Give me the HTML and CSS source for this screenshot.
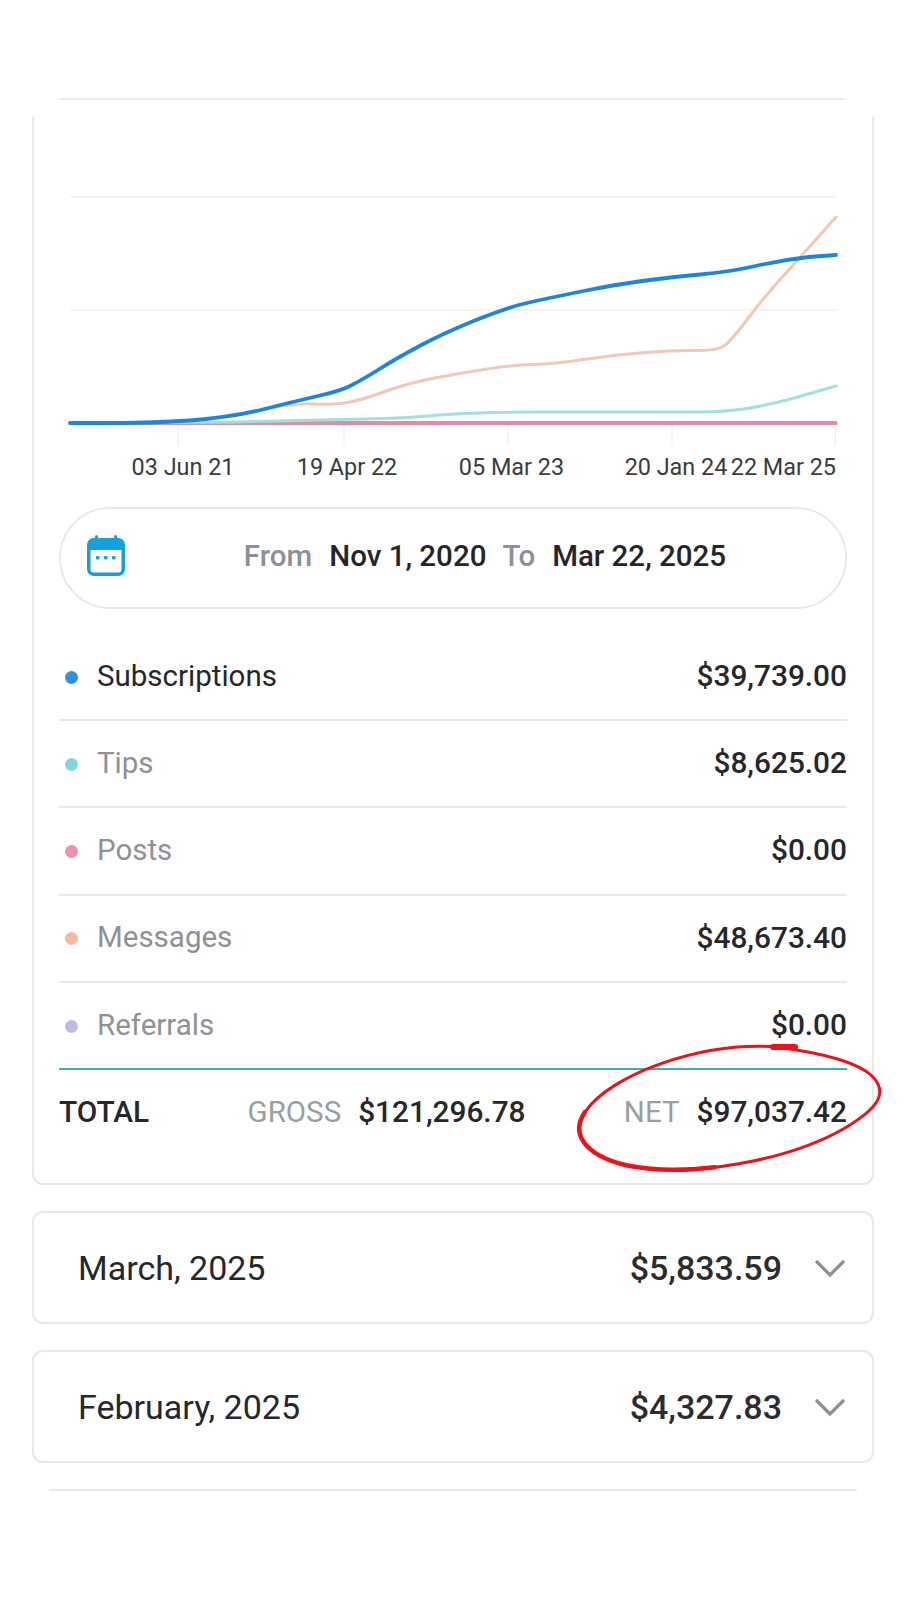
FILE: index.html
```html
<!DOCTYPE html>
<html lang="en">
<head>
<meta charset="utf-8">
<title>Earnings statistics</title>
<link rel="stylesheet" href="styles.css">
</head>
<body>
<main class="page">
  <div class="rule rule-top"></div>
  <section class="card">
    <svg class="chart" viewBox="34 117 838 390" width="838" height="390">
      <g class="grid">
        <path d="M70 197H836M70 310H836"/>
        <path class="ticks" d="M178 423V445M344 423V445M508 423V445M672 423V445M835.500 423V445"/>
      </g>
      <path class="line purple" d="M70 422H836"/>
      <path class="line pink" d="M70 423.500H836"/>
      <path class="line teal" d="M70 423L233 422L385 418.500Q408 418 428.500 416Q449 414 478.500 413Q508 412 540 412L700 412Q724 412 747 408.500Q770 405 803 395.500L836 386"/>
      <path class="line peach" d="M233 416L262.500 410Q292 403 312.500 404Q333 405 347.500 402.500Q362 400 385 391.500Q408 383 437.500 377.500Q467 372 490.500 368.500Q514 365 534 364.500Q554 364 583.500 359.500Q613 355 645 352.500Q677 350 697.500 350.500Q719 351 726.500 344Q734 337 749.500 316.500Q765 296 785 274L836 217"/>
      <path class="line blue" d="M70 423L120 423Q150 423 190 420.500Q233 417 262.500 409.500Q292 402 318 396Q340 391 350 386Q362 380 379.500 369Q397 358 420.500 345.500Q444 333 476 320Q508 307 531 302Q554 297 583.500 291Q613 285 642 281Q671 277 700 274.500Q729 272 755.500 266Q782 260 809 257L836 255"/>
      <g class="axis">
        <text x="183" y="474.500" text-anchor="middle">03 Jun 21</text>
        <text x="347" y="474.500" text-anchor="middle">19 Apr 22</text>
        <text x="511.500" y="474.500" text-anchor="middle">05 Mar 23</text>
        <text x="676" y="474.500" text-anchor="middle">20 Jan 24</text>
        <text x="836" y="474.500" text-anchor="end">22 Mar 25</text>
      </g>
    </svg>

    <div class="range">
      <svg class="cal" viewBox="0 0 38 41" width="38" height="41">
        <rect class="cal-body" x="1.750" y="4.750" width="34.500" height="34.500" rx="5"/>
        <path class="cal-band" d="M3 9a3 3 0 0 1 3-3h26a3 3 0 0 1 3 3v6H3z"/>
        <rect class="cal-fill" x="8" y="0" width="3" height="6" rx="1.500"/>
        <rect class="cal-fill" x="27" y="0" width="3" height="6" rx="1.500"/>
        <rect class="cal-fill" x="9" y="21" width="3.500" height="3.500" rx="1"/>
        <rect class="cal-fill" x="17" y="21" width="3.500" height="3.500" rx="1"/>
        <rect class="cal-fill" x="25" y="21" width="3.500" height="3.500" rx="1"/>
      </svg>
      <div class="range-text">
        <span class="muted">From</span><strong>Nov 1, 2020</strong><span class="muted">To</span><strong>Mar 22, 2025</strong>
      </div>
    </div>

    <ul class="rows">
      <li class="row"><span class="dot d-blue"></span><span class="name first">Subscriptions</span><span class="val">$39,739.00</span></li>
      <li class="row"><span class="dot d-teal"></span><span class="name">Tips</span><span class="val">$8,625.02</span></li>
      <li class="row"><span class="dot d-pink"></span><span class="name">Posts</span><span class="val">$0.00</span></li>
      <li class="row"><span class="dot d-peach"></span><span class="name">Messages</span><span class="val">$48,673.40</span></li>
      <li class="row"><span class="dot d-purple"></span><span class="name">Referrals</span><span class="val">$0.00</span></li>
    </ul>

    <div class="total">
      <span class="val">TOTAL</span>
      <span class="pair"><span class="soft">GROSS</span><span class="val">$121,296.78</span></span>
      <span class="pair"><span class="soft">NET</span><span class="val">$97,037.42</span></span>
    </div>
  </section>

  <section class="month">
    <span class="m-name">March, 2025</span>
    <span class="m-val">$5,833.59</span>
    <svg class="chev" viewBox="0 0 32 20" width="32" height="20"><path d="M2 3L16 17L30 3"/></svg>
  </section>
  <section class="month">
    <span class="m-name">February, 2025</span>
    <span class="m-val">$4,327.83</span>
    <svg class="chev" viewBox="0 0 32 20" width="32" height="20"><path d="M2 3L16 17L30 3"/></svg>
  </section>
  <div class="rule rule-bottom"></div>

  <svg class="scribble" viewBox="0 0 915 1600" width="915" height="1600">
    <path d="M778 1047C700 1041 610 1075 585 1112C570 1134 585 1155 625 1165C690 1179 790 1160 845 1128C880 1107 888 1092 872 1076C855 1060 815 1052 776 1047"/>
    <path class="heavy" d="M585 1112C570 1134 585 1155 625 1165C651 1170.600 682.600 1170.900 714.700 1167.200"/>
    <path class="thick" d="M773 1047H795"/>
  </svg>
</main>
</body>
</html>
```
FILE: styles.css
```css
* { box-sizing: border-box; }
html, body { margin: 0; background: #fff; }
body { font-family: Roboto, "Liberation Sans", sans-serif; color: #242529; }

.page { position: relative; width: 915px; height: 1600px; padding-top: 98px; overflow: hidden; }

.rule { height: 2px; background: #e9e9ea; }
.rule-top { width: 786px; margin-left: 59px; margin-bottom: 17px; }
.rule-bottom { width: 808px; margin-left: 49px; }

.card { width: 842px; height: 1068px; margin: 0 0 26px 32px;
  border: 2px solid #e8e8ea; border-top: 0; border-radius: 0 0 11px 11px; }

.chart { display: block; }
.grid path { fill: none; stroke: #f1f1f2; stroke-width: 1.500; }
.grid .ticks { stroke: #ececee; stroke-width: 1; }
.line { fill: none; stroke-linecap: round; stroke-linejoin: round; }
.blue { stroke: #1b86dd; stroke-width: 3.800; }
.peach { stroke: #f3c6b6; stroke-width: 3; }
.teal { stroke: #a0e1de; stroke-width: 3; }
.pink { stroke: #e58aa3; stroke-width: 3; }
.purple { stroke: #a9a5bd; stroke-width: 2; }
.axis text { font-size: 23.400px; fill: #3a3b40; }

.range { display: flex; align-items: center; width: 788px; height: 102px; margin-left: 25px;
  padding: 0 0 5px 26px; border: 2px solid #e8e8ea; border-radius: 51px; }
.cal { flex: none; }
.cal-body { fill: #fff; stroke: #14a0dc; stroke-width: 3.500; }
.cal-band, .cal-fill { fill: #14a0dc; }
.range-text { flex: 1; display: flex; justify-content: center; align-items: baseline;
  font-size: 29.500px; }
.range-text strong { font-weight: 500; margin: 0 16px 0 17px; }
.range-text strong:last-child { margin-right: 0; }
.muted { color: #8d9098; font-weight: 500; }

.rows { list-style: none; margin: 22px 0 0 25px; padding: 0; width: 788px; }
.row { display: flex; align-items: center; height: 87.300px; padding-bottom: 2px;
  border-bottom: 2px solid #e9e9eb; font-size: 29.500px; }
.rows .row:first-child { height: 90px; padding: 1px 0 0; }
.rows .row:last-child { border-bottom-color: #45a9bb; }
.dot { flex: none; width: 13px; height: 13px; margin: 3px 0 0 6px; border-radius: 50%; }
.d-blue { background: #2f8fe2; }
.d-teal { background: #7fd9d8; }
.d-pink { background: #ef90b0; }
.d-peach { background: #f8b9a1; }
.d-purple { background: #c2bae2; }
.name { flex: 1; margin-left: 19px; color: #8f9196; }
.name.first { color: #26272b; }
.val { font-weight: 500; color: #26272b; font-size: 29.800px; }

.total { display: flex; justify-content: space-between; align-items: center; width: 788px; height: 82px; margin-left: 25px; }
.pair { display: flex; align-items: baseline; gap: 17px; }
.soft { font-size: 29.500px; color: #9a9da2; }

.month { display: flex; align-items: center; width: 842px; height: 113px; margin: 0 0 26px 32px;
  padding: 0 26px 0 44px; border: 2px solid #e8e8ea; border-radius: 11px; }
.m-name { flex: 1; font-size: 34px; color: #26272b; }
.m-val { font-size: 34px; font-weight: 500; color: #2b2c30; margin-right: 32px; }
.chev { flex: none; }
.chev path { fill: none; stroke: #8b9096; stroke-width: 3.200; }

.scribble { position: absolute; left: 0; top: 0; pointer-events: none; }
.scribble path { fill: none; stroke: #f01018; stroke-width: 3; stroke-linecap: round; }
.scribble .heavy { stroke-width: 4.500; }
.scribble .thick { stroke-width: 6; }
```
